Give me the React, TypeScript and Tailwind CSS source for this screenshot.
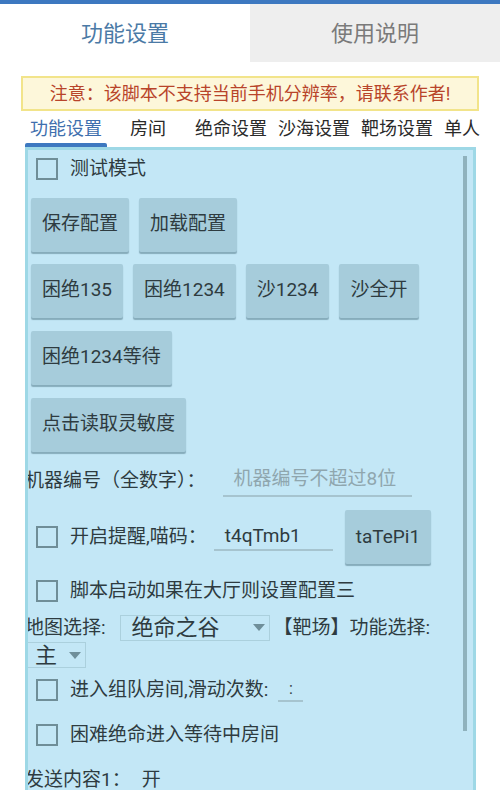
import React from 'react'

const font = { fontFamily: 'Roboto, "Noto Sans CJK SC", sans-serif' }

const Check = ({ label }: { label: string }) => (
  <div className="flex items-center gap-3 pl-[8px]">
    <span className="w-[22px] h-[22px] border-2 border-[#6f8e98] box-border shrink-0" />
    <span className="text-[19px] text-[#2e3b40]">{label}</span>
  </div>
)

const Btn = ({ label }: { label: string }) => (
  <button className="h-[54px] px-[11px] bg-[#a6ccdb] text-[19px] text-[#2e3b40] rounded-[2px] shadow-[0_2px_1px_rgba(60,100,115,0.45)]">
    {label}
  </button>
)

const Arrow = () => (
  <svg width="12" height="7" viewBox="0 0 12 7" className="shrink-0">
    <polygon points="0,0 12,0 6,7" fill="#6f8f9a" />
  </svg>
)

export default function App() {
  return (
    <div style={font} className="w-[500px] h-[790px] overflow-hidden bg-white flex flex-col">
      <div className="h-[4px] shrink-0 bg-[#3d78c0]" />
      <div className="flex h-[58px] shrink-0">
        <div className="flex-1 flex items-center justify-center text-[22px] text-[#4b7aa6] bg-white">功能设置</div>
        <div className="flex-1 flex items-center justify-center text-[22px] text-[#7a7a7a] bg-[#eeeeee]">使用说明</div>
      </div>
      <div className="shrink-0 mx-[21px] mt-[14px] h-[35px] bg-[#fdf7da] border-2 border-[#f2e48a] flex items-center justify-center text-[18px] text-[#b8442a]">
        注意：该脚本不支持当前手机分辨率，请联系作者!
      </div>
      <div className="shrink-0 relative ml-[25px] h-[36px] flex items-start pt-[4px] text-[18px] text-[#2a2a2a] whitespace-nowrap overflow-hidden">
        <span className="w-[82px] text-center text-[#3f6fae]">功能设置</span>
        <span className="ml-[23px]">房间</span>
        <span className="ml-[29px]">绝命设置</span>
        <span className="ml-[11px]">沙海设置</span>
        <span className="ml-[11px]">靶场设置</span>
        <span className="ml-[11px]">单人</span>
        <div className="absolute left-0 bottom-0 w-[82px] h-[4px] bg-[#3d78c0] rounded-t-[2px]" />
      </div>
      <div className="relative ml-[25px] mr-[24px] flex-1 min-h-0 overflow-hidden bg-[#c3e7f6] border-x-[3px] border-t-[3px] border-[#9ed8e6]">
        <div className="absolute right-[6px] top-[6px] w-[4px] h-[575px] bg-[#8fb2bd]" />
        <div className="flex flex-col pr-[18px]">
          <div className="mt-[5px]"><Check label="测试模式" /></div>
          <div className="flex gap-[10px] mt-[14px] pl-[3px]">
            <Btn label="保存配置" />
            <Btn label="加载配置" />
          </div>
          <div className="flex gap-[10px] mt-[12px] pl-[3px]">
            <Btn label="困绝135" />
            <Btn label="困绝1234" />
            <Btn label="沙1234" />
            <Btn label="沙全开" />
          </div>
          <div className="flex mt-[13px] pl-[3px]">
            <Btn label="困绝1234等待" />
          </div>
          <div className="flex mt-[13px] pl-[3px]">
            <Btn label="点击读取灵敏度" />
          </div>
          <div className="flex items-center mt-[13px] text-[19px] text-[#2e3b40] -ml-[3px]">
            <span>机器编号（全数字）：</span>
            <span className="ml-[17px] w-[189px] border-b-2 border-[#a6c4cf] pl-[11px] pb-[2px] text-[#8fa6ae]">机器编号不超过8位</span>
          </div>
          <div className="flex items-center mt-[13px]">
            <Check label="开启提醒,喵码：" />
            <span className="ml-[7px] w-[119px] border-b-2 border-[#a6c4cf] pl-[11px] text-[19px] text-[#2e3b40] leading-[26px]">t4qTmb1</span>
            <span className="ml-[12px]"><Btn label="taTePi1" /></span>
          </div>
          <div className="mt-[13px]"><Check label="脚本启动如果在大厅则设置配置三" /></div>
          <div className="flex items-center mt-[8px] -ml-[3px] text-[19px] text-[#2e3b40] whitespace-nowrap">
            <span>地图选择:</span>
            <span className="ml-[14px] w-[150px] h-[26px] border border-[#abd0dd] flex items-center pl-[11px] pr-[4px] text-[22px] justify-between">
              <span>绝命之谷</span>
              <Arrow />
            </span>
            <span className="ml-[4px]">【靶场】功能选择:</span>
          </div>
          <div className="flex -ml-[3px]">
            <span className="w-[61px] h-[26px] border border-[#abd0dd] flex items-center pl-[9px] pr-[4px] text-[22px] text-[#2e3b40] justify-between">
              <span>主</span>
              <Arrow />
            </span>
          </div>
          <div className="flex items-center mt-[8px]">
            <Check label="进入组队房间,滑动次数:" />
            <span className="ml-[10px] w-[25px] h-[24px] border-b-2 border-[#a6c4cf] text-[16px] text-[#2e3b40] text-center leading-[22px]">:</span>
          </div>
          <div className="mt-[16px]"><Check label="困难绝命进入等待中房间" /></div>
          <div className="flex items-center mt-[17px] -ml-[3px] text-[19px] text-[#2e3b40]">
            <span>发送内容1：</span>
            <span className="ml-[11px]">开</span>
          </div>
        </div>
      </div>
    </div>
  )
}
